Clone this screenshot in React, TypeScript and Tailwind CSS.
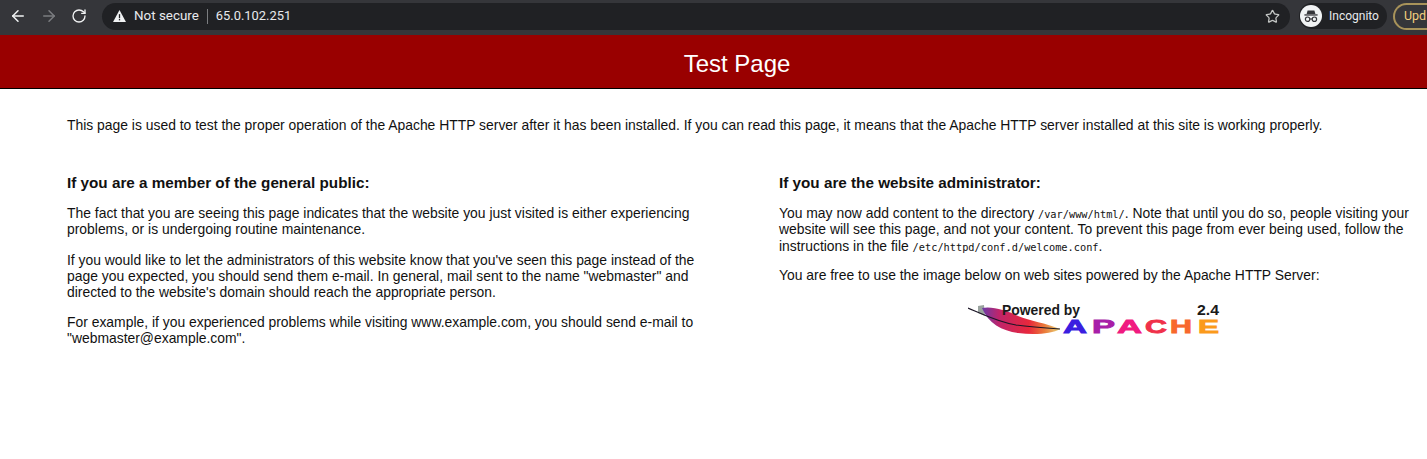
import React from 'react'
import { ArrowLeft, ArrowRight, RotateCw, Star } from 'lucide-react'

const Mono = ({ children }: { children: React.ReactNode }) => (
  <code className="font-['DejaVu_Sans_Mono',monospace] text-[10.3px] leading-none">{children}</code>
)

const Incognito = () => (
  <svg viewBox="0 0 22 22" className="w-[22px] h-[22px]">
    <circle cx="11" cy="11" r="11" fill="#f1f3f4" />
    <path d="M7.6 5.4h6.8l1 3.6H6.6z" fill="#35363a" />
    <rect x="4.4" y="9.3" width="13.2" height="1.3" fill="#35363a" />
    <circle cx="7.6" cy="14.2" r="2.2" fill="none" stroke="#35363a" strokeWidth="1.2" />
    <circle cx="14.4" cy="14.2" r="2.2" fill="none" stroke="#35363a" strokeWidth="1.2" />
    <path d="M9.8 14h2.4" stroke="#35363a" strokeWidth="1.1" />
  </svg>
)

// powered by apache badge, coordinates start at 968,301 of the page
const ApacheLogo = () => (
  <svg viewBox="0 0 254 36" className="block w-[254px] h-[36px] mt-[19px] ml-[189px] font-['Liberation_Sans',sans-serif]">
    <defs>
      <linearGradient id="feather" x1="0" x2="1" y1="0" y2="0">
        <stop offset="0" stopColor="#6a3aa8" />
        <stop offset="0.22" stopColor="#c0246a" />
        <stop offset="0.6" stopColor="#e8283c" />
        <stop offset="0.8" stopColor="#ea7a3a" />
        <stop offset="1" stopColor="#e8d67a" />
      </linearGradient>
    </defs>
    <path d="M10 4 l6 -1 l1 11 l-7 -3z" fill="#9aa39f" />
    <path d="M14 6 C24 4 38 8 50 14 C62 19 78 21 92 27 C84 32 66 33 50 31 C34 29 20 21 14 6Z" fill="url(#feather)" />
    <path d="M0 6 C14 12 30 20 48 23 C62 25 76 26 92 27" fill="none" stroke="#1c1626" strokeWidth="1.2" />
    <text x="34" y="13" fontSize="14" fontWeight="700" fill="#1a1a1a" textLength="78" lengthAdjust="spacingAndGlyphs">Powered by</text>
    <text x="229" y="13" fontSize="14" fontWeight="700" fill="#1a1a1a" textLength="22" lengthAdjust="spacingAndGlyphs">2.4</text>
    <g fontSize="18" fontWeight="700" strokeWidth="0.8">
      <text x="95" y="31" fill="#3a1ee0" stroke="#3a1ee0" textLength="24" lengthAdjust="spacingAndGlyphs">A</text>
      <text x="124" y="31" fill="#a81ea8" stroke="#a81ea8" textLength="23" lengthAdjust="spacingAndGlyphs">P</text>
      <text x="149" y="31" fill="#f01a80" stroke="#f01a80" textLength="25" lengthAdjust="spacingAndGlyphs">A</text>
      <text x="177" y="31" fill="#f0304a" stroke="#f0304a" textLength="22" lengthAdjust="spacingAndGlyphs">C</text>
      <text x="202" y="31" fill="#f8682c" stroke="#f8682c" textLength="22" lengthAdjust="spacingAndGlyphs">H</text>
      <text x="230" y="31" fill="#fb9a1c" stroke="#fb9a1c" textLength="21" lengthAdjust="spacingAndGlyphs">E</text>
    </g>
  </svg>
)

const App = () => {
  return (
    <div className="w-[1427px] h-[459px] overflow-hidden bg-white font-['Liberation_Sans',Arial,sans-serif] text-[13.9px] leading-[16.2px] text-[#111]">
      <div className="h-[35px] bg-[#35363a] flex items-center pb-[3px] font-['Roboto',sans-serif]">
        <div className="w-[102px] flex items-center pl-[9px] gap-[13px] shrink-0">
          <ArrowLeft className="w-[18px] h-[18px] text-[#f1f3f4]" strokeWidth={2} />
          <ArrowRight className="w-[18px] h-[18px] text-[#7b7d80]" strokeWidth={2} />
          <RotateCw className="w-[16px] h-[16px] text-[#f1f3f4]" strokeWidth={2} />
        </div>
        <div className="w-[1188px] h-[27px] rounded-full bg-[#202124] flex items-center pl-[11px] pr-[5px] shrink-0">
          <svg viewBox="0 0 14 13" className="w-[13px] h-[12px] text-[#f1f3f4]">
            <path d="M7 0 L14 13 H0Z" fill="currentColor" />
            <rect x="6.3" y="4.5" width="1.4" height="4.4" fill="#202124" />
            <rect x="6.3" y="9.8" width="1.4" height="1.4" fill="#202124" />
          </svg>
          <span className="ml-[8px] text-[13.4px] text-[#e8eaed]">Not secure</span>
          <span className="ml-[8px] w-px h-[15px] bg-[#7b7d80]" />
          <span className="ml-[8px] text-[12.9px] text-[#e8eaed]">65.0.102.251</span>
          <Star className="ml-auto mr-[5px] w-[15px] h-[15px] text-[#c4c7c5]" strokeWidth={2} />
        </div>
        <div className="ml-[9px] h-[26px] w-[88px] rounded-full bg-[#202124] flex items-center pl-[1px] shrink-0">
          <Incognito />
          <span className="ml-[7px] text-[12px] text-[#e8eaed]">Incognito</span>
        </div>
        <div className="ml-[6px] h-[27px] flex-1 rounded-l-full border-y-2 border-l-2 border-[#a8935a] flex items-center pl-[9px] text-[12.5px] text-[#f2cf7e] overflow-hidden">
          Upd
        </div>
      </div>

      <div className="h-[54px] bg-[#990000] border-b border-black flex items-center justify-center pl-[47px] pt-[5px] text-[24px] text-white">
        Test Page
      </div>

      <div className="pl-[67px] pr-[7px]">
        <p className="pt-[28px]">
          This page is used to test the proper operation of the Apache HTTP server after it has been installed. If you can read this page, it means that the Apache HTTP server installed at this site is working properly.
        </p>
        <div className="grid grid-cols-[712px_1fr] mt-[41px]">
          <div className="pr-[72px]">
            <h2 className="text-[15.25px] font-bold leading-[18px]">If you are a member of the general public:</h2>
            <p className="mt-[13px]">
              The fact that you are seeing this page indicates that the website you just visited is either experiencing problems, or is undergoing routine maintenance.
            </p>
            <p className="mt-[14px]">
              If you would like to let the administrators of this website know that you've seen this page instead of the page you expected, you should send them e-mail. In general, mail sent to the name "webmaster" and directed to the website's domain should reach the appropriate person.
            </p>
            <p className="mt-[14px]">
              For example, if you experienced problems while visiting www.example.com, you should send e-mail to "webmaster@example.com".
            </p>
          </div>
          <div>
            <h2 className="text-[15.25px] font-bold leading-[18px]">If you are the website administrator:</h2>
            <p className="mt-[13px]">
              You may now add content to the directory <Mono>/var/www/html/</Mono>. Note that until you do so, people visiting your website will see this page, and not your content. To prevent this page from ever being used, follow the instructions in the file <Mono>/etc/httpd/conf.d/welcome.conf</Mono>.
            </p>
            <p className="mt-[13px]">
              You are free to use the image below on web sites powered by the Apache HTTP Server:
            </p>
            <ApacheLogo />
          </div>
        </div>
      </div>
    </div>
  )
}

export default App
